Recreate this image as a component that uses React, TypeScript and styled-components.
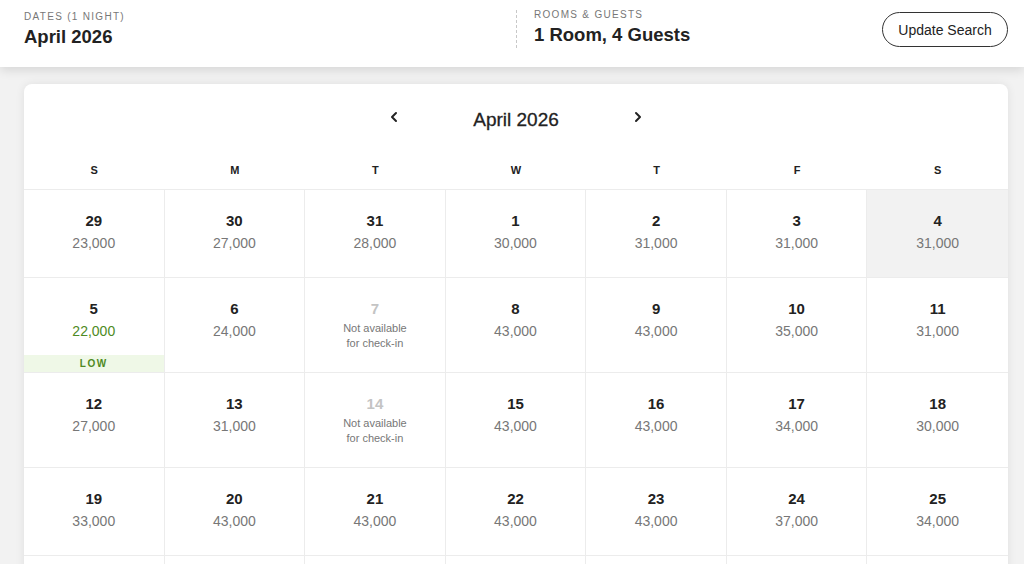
import React, { ReactElement } from 'react';
import styled, { createGlobalStyle } from 'styled-components';

type Day = {
    day: number;
    price?: string;
    unavailable?: boolean;
    low?: boolean;
    selected?: boolean;
};

const WEEKDAYS = ['S', 'M', 'T', 'W', 'T', 'F', 'S'];

const DAYS: Day[] = [
    { day: 29, price: '23,000' },
    { day: 30, price: '27,000' },
    { day: 31, price: '28,000' },
    { day: 1, price: '30,000' },
    { day: 2, price: '31,000' },
    { day: 3, price: '31,000' },
    { day: 4, price: '31,000', selected: true },
    { day: 5, price: '22,000', low: true },
    { day: 6, price: '24,000' },
    { day: 7, unavailable: true },
    { day: 8, price: '43,000' },
    { day: 9, price: '43,000' },
    { day: 10, price: '35,000' },
    { day: 11, price: '31,000' },
    { day: 12, price: '27,000' },
    { day: 13, price: '31,000' },
    { day: 14, unavailable: true },
    { day: 15, price: '43,000' },
    { day: 16, price: '43,000' },
    { day: 17, price: '34,000' },
    { day: 18, price: '30,000' },
    { day: 19, price: '33,000' },
    { day: 20, price: '43,000' },
    { day: 21, price: '43,000' },
    { day: 22, price: '43,000' },
    { day: 23, price: '43,000' },
    { day: 24, price: '37,000' },
    { day: 25, price: '34,000' },
    { day: 26, price: '29,000' },
    { day: 27, price: '31,000' },
    { day: 28, price: '31,000' },
    { day: 29, price: '33,000' },
    { day: 30, price: '35,000' },
    { day: 1, price: '36,000' },
    { day: 2, price: '34,000' },
];

const Chevron = ({ dir }: { dir: 'left' | 'right' }) => (
    <svg width="10" height="12" viewBox="0 0 10 12" fill="none">
        <path
            d={dir === 'left' ? 'M7 2 L3 6 L7 10' : 'M3 2 L7 6 L3 10'}
            stroke="#222"
            strokeWidth="2"
            strokeLinecap="round"
            strokeLinejoin="round"
        />
    </svg>
);

export default function App(): ReactElement {
    return (
        <>
            <GlobalStyle />
            <Page>
                <Header>
                    <Field>
                        <Label>Dates (1 night)</Label>
                        <Value>April 2026</Value>
                    </Field>
                    <RightField>
                        <Field>
                            <Label $up>Rooms &amp; Guests</Label>
                            <Value>1 Room, 4 Guests</Value>
                        </Field>
                        <UpdateButton>Update Search</UpdateButton>
                    </RightField>
                </Header>

                <Card>
                    <MonthNav>
                        <NavButton aria-label="Previous month"><Chevron dir="left" /></NavButton>
                        <MonthTitle>April 2026</MonthTitle>
                        <NavButton aria-label="Next month"><Chevron dir="right" /></NavButton>
                    </MonthNav>
                    <WeekRow>
                        {WEEKDAYS.map((w, i) => (
                            <WeekDay key={i}>{w}</WeekDay>
                        ))}
                    </WeekRow>
                    <Grid>
                        {DAYS.map((d, i) => (
                            <Cell key={i} $selected={d.selected} $last={i % 7 === 6}>
                                <DayNum $muted={d.unavailable}>{d.day}</DayNum>
                                {d.unavailable ? (
                                    <NotAvailable>Not available<br />for check-in</NotAvailable>
                                ) : (
                                    <Price $low={d.low}>{d.price}</Price>
                                )}
                                {d.low && <LowBadge>Low</LowBadge>}
                            </Cell>
                        ))}
                    </Grid>
                </Card>
            </Page>
        </>
    );
}

const GlobalStyle = createGlobalStyle`
    body {
        margin: 0;
        background: #f2f2f2;
        font-family: "Liberation Sans", Arial, sans-serif;
        color: #222;
    }
`;

const Page = styled.div`
    min-height: 564px;
    background: #f2f2f2;
`;

const Header = styled.header`
    display: grid;
    grid-template-columns: 492px 492px;
    padding: 0 16px 0 24px;
    height: 67px;
    background: #fff;
    box-shadow: 0 3px 10px rgba(0, 0, 0, 0.12);
    position: relative;
    z-index: 1;
`;

const Field = styled.div`
    display: flex;
    flex-direction: column;
`;

const RightField = styled.div`
    display: flex;
    align-items: center;
    justify-content: space-between;
    border-left: 1px dashed #c8c8c8;
    margin: 10px 0 19px;
    padding-left: 17px;

    ${Field} {
        margin-top: -3px;
    }
`;

const Label = styled.div<{ $up?: boolean }>`
    font-size: 10px;
    letter-spacing: 1.3px;
    text-transform: uppercase;
    color: #777;
    margin-top: ${(p) => (p.$up ? '0' : '11px')};
    line-height: 12px;
`;

const Value = styled.div`
    font-size: 18.5px;
    font-weight: bold;
    color: #222;
    margin-top: 3px;
    line-height: 22px;
`;

const UpdateButton = styled.button`
    width: 126px;
    height: 35px;
    margin-top: 1px;
    border: 1px solid #333;
    border-radius: 18px;
    background: #fff;
    font-family: "Liberation Sans", Arial, sans-serif;
    font-size: 14px;
    color: #222;
    cursor: pointer;
`;

const Card = styled.section`
    margin: 17px 16px 0 24px;
    background: #fff;
    border-radius: 8px 8px 0 0;
    box-shadow: 0 0 10px rgba(0, 0, 0, 0.08);
    overflow: hidden;
`;

const MonthNav = styled.div`
    display: flex;
    align-items: center;
    justify-content: center;
    gap: 72px;
    padding-top: 23px;
    height: 26px;
`;

const NavButton = styled.button`
    display: flex;
    align-items: center;
    justify-content: center;
    width: 14px;
    height: 14px;
    padding: 0;
    border: none;
    background: none;
    margin-top: -7px;
    cursor: pointer;
`;

const MonthTitle = styled.h2`
    margin: 0;
    font-size: 19px;
    font-weight: normal;
    color: #222;
    -webkit-text-stroke: 0.3px #222;
`;

const WeekRow = styled.div`
    display: grid;
    grid-template-columns: repeat(7, 1fr);
    padding: 30px 0 12px;
`;

const WeekDay = styled.div`
    text-align: center;
    font-size: 11px;
    font-weight: bold;
    color: #222;
    line-height: 14px;
`;

const Grid = styled.div`
    display: grid;
    grid-template-columns: repeat(7, 1fr);
    grid-auto-rows: minmax(88px, auto);
`;

const Cell = styled.div<{ $selected?: boolean; $last?: boolean }>`
    position: relative;
    display: flex;
    flex-direction: column;
    align-items: center;
    padding: 21px 4px 21px;
    border-top: 1px solid #ececec;
    border-right: ${(p) => (p.$last ? 'none' : '1px solid #ececec')};
    background: ${(p) => (p.$selected ? '#f2f2f2' : '#fff')};
`;

const DayNum = styled.div<{ $muted?: boolean }>`
    font-size: 15px;
    font-weight: bold;
    line-height: 20px;
    color: ${(p) => (p.$muted ? '#c4c4c4' : '#222')};
`;

const Price = styled.div<{ $low?: boolean }>`
    font-size: 14px;
    line-height: 24px;
    color: ${(p) => (p.$low ? '#4e8a24' : '#777')};
`;

const NotAvailable = styled.div`
    font-size: 11px;
    line-height: 15px;
    color: #777;
    text-align: center;
    margin-top: 2px;
`;

const LowBadge = styled.div`
    position: absolute;
    left: 0;
    right: 0;
    bottom: 0;
    height: 17px;
    line-height: 17px;
    background: #eff8e7;
    color: #4e8a24;
    font-size: 10px;
    font-weight: bold;
    letter-spacing: 1.5px;
    text-align: center;
    text-transform: uppercase;
`;
